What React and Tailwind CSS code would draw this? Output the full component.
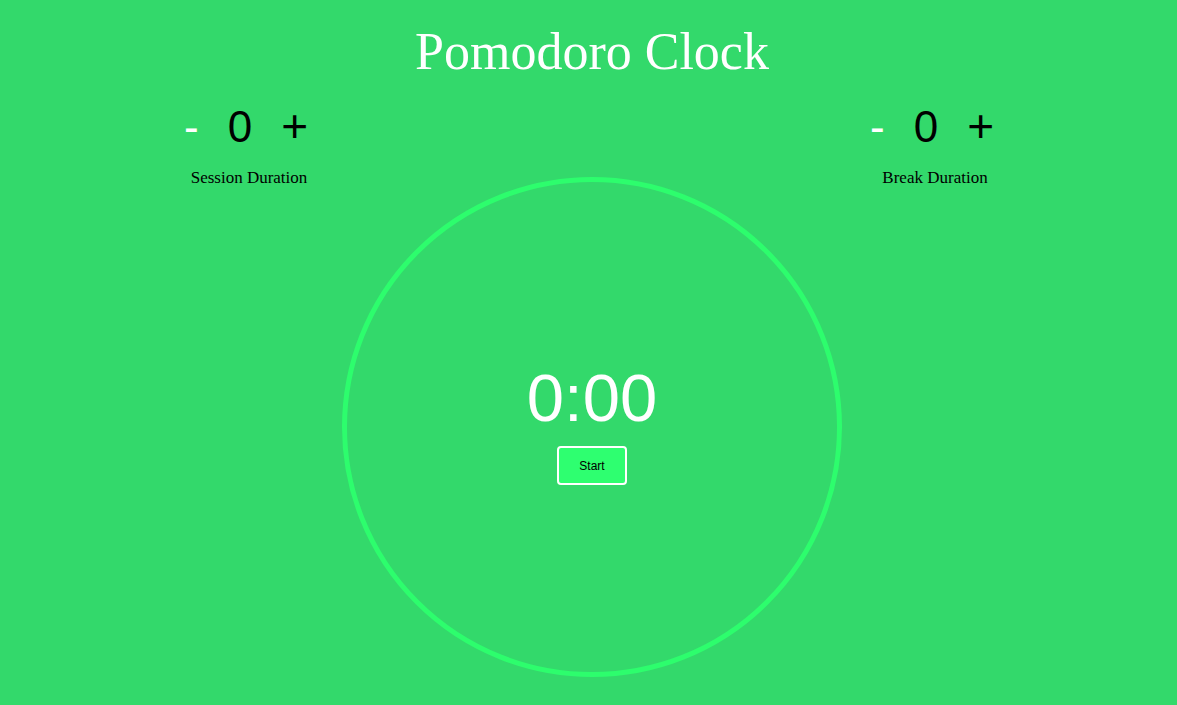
const DurationControl = ({ label, value }) => (
  <div className="w-[160px] flex flex-col items-center">
    <div className="mr-[6px] flex items-baseline gap-[29px] text-[44px] leading-none font-['Liberation_Sans',Arial,sans-serif]">
      <button className="text-white leading-none">-</button>
      <span className="text-black">{value}</span>
      <button className="text-black leading-none text-[46px]">+</button>
    </div>
    <p className="mt-[20px] text-[17px] leading-none text-black font-['Liberation_Serif','Times_New_Roman',serif]">
      {label}
    </p>
  </div>
);

export default function App() {
  return (
    <div className="min-h-[705px] w-full bg-[#33d96b] pl-[7px] overflow-hidden">
      <h1 className="pt-[26px] text-center text-[52px] leading-none text-white font-['Liberation_Serif','Times_New_Roman',serif]">
        Pomodoro Clock
      </h1>

      <div className="mt-[25px] flex justify-center items-start gap-[13px]">
        <DurationControl label="Session Duration" value={0} />

        <div className="mt-[74px] w-[500px] h-[500px] shrink-0 rounded-full border-[5px] border-[#2dfd6d] flex flex-col items-center justify-center pb-[5px]">
          <div className="text-[67px] leading-none text-white font-['Liberation_Sans',Arial,sans-serif]">0:00</div>
          <button className="mt-[15px] w-[70px] h-[39px] rounded-[4px] border-2 border-white bg-[#2eff70] text-[12px] text-black font-['Liberation_Sans',Arial,sans-serif]">
            Start
          </button>
        </div>

        <DurationControl label="Break Duration" value={0} />
      </div>
    </div>
  );
}
